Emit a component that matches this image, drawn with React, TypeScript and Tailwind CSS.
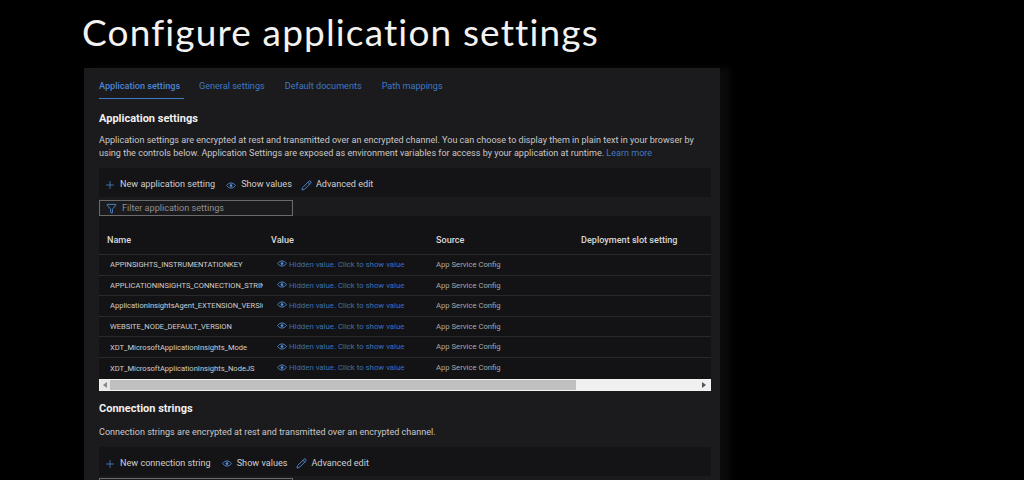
import { Plus, Pencil, Filter } from "lucide-react";

const rows = [
  "APPINSIGHTS_INSTRUMENTATIONKEY",
  "APPLICATIONINSIGHTS_CONNECTION_STRING",
  "ApplicationInsightsAgent_EXTENSION_VERSION",
  "WEBSITE_NODE_DEFAULT_VERSION",
  "XDT_MicrosoftApplicationInsights_Mode",
  "XDT_MicrosoftApplicationInsights_NodeJS",
];

const tabs = ["General settings", "Default documents", "Path mappings"];

// Azure portal style eye: outlined almond with a solid pupil
function EyeIcon({ className }: { className: string }) {
  return (
    <svg viewBox="0 0 16 10" className={className} fill="none">
      <path d="M1 5C3 2 5.5 1 8 1s5 1 7 4c-2 3-4.5 4-7 4S3 8 1 5Z" stroke="currentColor" strokeWidth="1.5" />
      <circle cx="8" cy="5" r="2.2" fill="currentColor" />
    </svg>
  );
}

function Toolbar({ label }: { label: string }) {
  return (
    <div className="flex h-[29px] items-center bg-[#141316] pl-[5px] pt-[5px] text-[9.1px] text-[#cfcfd0]">
      <Plus className="h-[12px] w-[12px] text-[#4f8fd8]" strokeWidth={1.5} />
      <span className="ml-[4px]">{label}</span>
      <EyeIcon className="ml-[11px] h-[7px] w-[10px] text-[#4f8fd8]" />
      <span className="ml-[5px]">Show values</span>
      <Pencil className="ml-[9px] h-[11px] w-[11px] text-[#4f8fd8]" strokeWidth={2} />
      <span className="ml-[4px]">Advanced edit</span>
    </div>
  );
}

export default function App() {
  return (
    <div className="flex h-[480px] w-[1024px] flex-col overflow-hidden bg-black font-['Roboto',sans-serif]">
      <h1 className="h-[68px] shrink-0 pl-[82px] pt-[9px] font-['Lato',sans-serif] text-[37px] leading-[46px] tracking-[1.15px] text-[#f2f2f2]">
        Configure application settings
      </h1>

      <div className="ml-[84px] w-[636px] flex-1 bg-[#1b1a1c] px-[15px] pr-[9px] shadow-[10px_0_6px_#0b0b0c]">
        {/* Tabs */}
        <div className="flex h-[31px] items-end gap-[15px] whitespace-nowrap text-[9.1px] text-[#3f79c4]">
          <div className="relative flex h-[31px] w-[85px] items-center pt-[6px] font-medium text-[#4a86d4]">
            Application settings
            <div className="absolute bottom-0 left-0 h-[1.5px] w-[85px] bg-[#3f79c4]" />
          </div>
          {tabs.map((t) => (
            <div key={t} className="mr-[5px] flex h-[31px] items-center pt-[6px]">
              {t}
            </div>
          ))}
        </div>

        <h2 className="mt-[13px] text-[11px] font-bold leading-[14px] text-[#f0f0f0]">Application settings</h2>
        <p className="mt-[8px] w-[612px] text-[9.05px] leading-[13px] text-[#c8c8c9]">
          Application settings are encrypted at rest and transmitted over an encrypted channel. You can choose to display them in plain text in your browser by
          using the controls below. Application Settings are exposed as environment variables for access by your application at runtime. <span className="text-[#3f79c4]">Learn more</span>
        </p>

        <div className="mt-[8px]">
          <Toolbar label="New application setting" />
        </div>

        <div className="mt-[3px] flex h-[16px] w-[194px] items-center border border-[#6a6a6b] pl-[6px] text-[9.1px] text-[#8f8f90]">
          <Filter className="h-[11px] w-[11px] text-[#4f8fd8]" strokeWidth={2} />
          <span className="ml-[5px] pt-[1px]">Filter application settings</span>
        </div>

        {/* Table */}
        <div className="bg-[#131315]">
          <div className="grid h-[39px] grid-cols-[172px_165px_145px_130px] items-center border-b border-[#29292b] pt-[11px] text-[9.1px] font-medium text-[#d8d8d9]">
            <div className="pl-[8px]">Name</div>
            <div>Value</div>
            <div>Source</div>
            <div>Deployment slot setting</div>
          </div>
          {rows.map((name) => (
            <div
              key={name}
              className="grid h-[20.6px] grid-cols-[172px_165px_145px_130px] items-center border-b border-[#29292b] last:border-b-0"
            >
              <div className="pl-[11px] pr-[8px]">
                <div className="overflow-hidden whitespace-nowrap text-[7.55px] text-[#cfcfd0]">{name}</div>
              </div>
              <div className="flex items-center whitespace-nowrap pl-[6px] text-[7.8px] text-[#3a6fb5]">
                <EyeIcon className="h-[7px] w-[10px] shrink-0 -translate-y-[1px] text-[#4f8fd8]" />
                <span className="ml-[2px]">Hidden value. Click to show value</span>
              </div>
              <div className="text-[7.7px] text-[#a9a9aa]">App Service Config</div>
              <div />
            </div>
          ))}
        </div>

        {/* Scrollbar */}
        <div className="flex h-[12px] items-stretch border border-[#f2f2f2] bg-[#f0f0f1]">
          <div className="flex w-[10px] items-center justify-center bg-[#e8e8e9]">
            <div className="h-0 w-0 border-y-[3px] border-r-[4px] border-y-transparent border-r-[#888888]" />
          </div>
          <div className="w-[466px] bg-[#c0c0c0]" />
          <div className="flex flex-1 items-center justify-end pr-[4px]">
            <div className="h-0 w-0 border-y-[3px] border-l-[4px] border-y-transparent border-l-[#555555]" />
          </div>
        </div>

        <h2 className="mt-[11px] text-[11px] font-bold leading-[14px] text-[#f0f0f0]">Connection strings</h2>
        <p className="mt-[10px] text-[9.05px] leading-[13px] text-[#c8c8c9]">
          Connection strings are encrypted at rest and transmitted over an encrypted channel.
        </p>

        <div className="mt-[8px]">
          <Toolbar label="New connection string" />
        </div>
        <div className="mt-[2px] h-[16px] w-[194px] border border-[#6a6a6b]" />
      </div>
    </div>
  );
}
